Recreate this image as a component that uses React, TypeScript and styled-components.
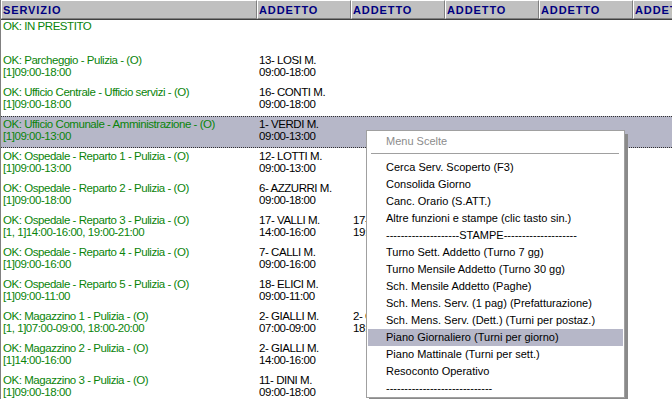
import React from "react";
import styled, { createGlobalStyle } from "styled-components";

const GlobalStyle = createGlobalStyle`
  html, body {
    margin: 0;
    padding: 0;
    background: #ffffff;
    overflow: hidden;
  }
`;

const COLS = "256px 94px 94px 94px 94px 94px";

const Screen = styled.div`
  width: 672px;
  height: 399px;
  overflow: hidden;
  position: relative;
  background: #ffffff;
  border-left: 1px solid #808080;
  box-sizing: border-box;
`;

const HeaderRow = styled.div`
  display: grid;
  grid-template-columns: ${COLS};
  height: 20px;
  background: #c0c0c0;
  border-bottom: 1px solid #404040;
  box-sizing: border-box;
`;

const HeaderCell = styled.div`
  display: flex;
  align-items: center;
  padding-left: 1px;
  border-top: 1px solid #ffffff;
  border-left: 1px solid #ffffff;
  border-right: 1px solid #808080;
  border-bottom: 1px solid #808080;
  font-family: "Liberation Sans", Arial, sans-serif;
  font-weight: bold;
  font-size: 11px;
  letter-spacing: 0.9px;
  color: #000080;
  white-space: nowrap;
  overflow: hidden;
`;

const Row = styled.div<{ $selected?: boolean; $first?: boolean }>`
  display: grid;
  grid-template-columns: ${COLS};
  height: 32px;
  box-sizing: border-box;
  padding-top: ${(p) => (p.$first ? "0px" : p.$selected ? "1px" : "2px")};
  background: ${(p) => (p.$selected ? "#b6b7c8" : "transparent")};
  border-top: ${(p) => (p.$selected ? "1px dotted #303030" : "none")};
  border-bottom: ${(p) => (p.$selected ? "1px dotted #303030" : "none")};
`;

const Cell = styled.div<{ $green?: boolean }>`
  display: flex;
  flex-direction: column;
  padding-left: 2px;
  font-family: "Liberation Sans", Arial, sans-serif;
  font-size: 11.5px;
  letter-spacing: -0.45px;
  line-height: 12px;
  color: ${(p) => (p.$green ? "#0a840a" : "#000000")};
  white-space: nowrap;
  overflow: hidden;
`;

const Menu = styled.div`
  position: absolute;
  left: 365px;
  top: 130px;
  width: 255px;
  padding: 2px 1px 0;
  background: #ffffff;
  border: 1px solid #a0a0a0;
  box-shadow: 3px 4px 0 #8a8a8a;
  font-family: "Liberation Sans", Arial, sans-serif;
  font-size: 11px;
`;

const MenuTitle = styled.div`
  height: 17px;
  line-height: 17px;
  padding-left: 18px;
  color: #8c8c8c;
`;

const MenuSeparator = styled.div`
  height: 1px;
  margin: 3px 4px 5px 3px;
  background: #a0a0a0;
`;

const MenuItem = styled.div<{ $active?: boolean }>`
  height: 17px;
  line-height: 17px;
  padding-left: 18px;
  color: #000000;
  white-space: nowrap;
  background: ${(p) => (p.$active ? "#b6b7c8" : "transparent")};
`;

type Turno = [string, string];

interface Servizio {
  nome: string;
  orario: string;
  addetti: Turno[];
  selected?: boolean;
}

const servizi: Servizio[] = [
  { nome: "OK: Parcheggio - Pulizia - (O)", orario: "[1]09:00-18:00", addetti: [["13- LOSI M.", "09:00-18:00"]] },
  { nome: "OK: Ufficio Centrale - Ufficio servizi - (O)", orario: "[1]09:00-18:00", addetti: [["16- CONTI M.", "09:00-18:00"]] },
  { nome: "OK: Ufficio Comunale - Amministrazione - (O)", orario: "[1]09:00-13:00", addetti: [["1- VERDI M.", "09:00-13:00"]], selected: true },
  { nome: "OK: Ospedale - Reparto 1 - Pulizia - (O)", orario: "[1]09:00-13:00", addetti: [["12- LOTTI M.", "09:00-13:00"]] },
  { nome: "OK: Ospedale - Reparto 2 - Pulizia - (O)", orario: "[1]09:00-18:00", addetti: [["6- AZZURRI M.", "09:00-18:00"]] },
  {
    nome: "OK: Ospedale - Reparto 3 - Pulizia - (O)",
    orario: "[1, 1]14:00-16:00, 19:00-21:00",
    addetti: [["17- VALLI M.", "14:00-16:00"], ["17- VALLI M.", "19:00-21:00"]],
  },
  { nome: "OK: Ospedale - Reparto 4 - Pulizia - (O)", orario: "[1]09:00-16:00", addetti: [["7- CALLI M.", "09:00-16:00"]] },
  { nome: "OK: Ospedale - Reparto 5 - Pulizia - (O)", orario: "[1]09:00-11:00", addetti: [["18- ELICI M.", "09:00-11:00"]] },
  {
    nome: "OK: Magazzino 1 - Pulizia - (O)",
    orario: "[1, 1]07:00-09:00, 18:00-20:00",
    addetti: [["2- GIALLI M.", "07:00-09:00"], ["2- GIALLI M.", "18:00-20:00"]],
  },
  { nome: "OK: Magazzino 2 - Pulizia - (O)", orario: "[1]14:00-16:00", addetti: [["2- GIALLI M.", "14:00-16:00"]] },
  { nome: "OK: Magazzino 3 - Pulizia - (O)", orario: "[1]09:00-18:00", addetti: [["11- DINI M.", "09:00-18:00"]] },
];

const voci = [
  "Cerca Serv. Scoperto (F3)",
  "Consolida Giorno",
  "Canc. Orario (S.ATT.)",
  "Altre funzioni e stampe (clic tasto sin.)",
  "--------------------STAMPE--------------------",
  "Turno Sett. Addetto (Turno 7 gg)",
  "Turno Mensile Addetto (Turno 30 gg)",
  "Sch. Mensile Addetto (Paghe)",
  "Sch. Mens. Serv. (1 pag) (Prefatturazione)",
  "Sch. Mens. Serv. (Dett.) (Turni per postaz.)",
  "Piano Giornaliero (Turni per giorno)",
  "Piano Mattinale (Turni per sett.)",
  "Resoconto Operativo",
  "-----------------------------",
];

export default function App() {
  return (
    <>
      <GlobalStyle />
      <Screen>
        <HeaderRow>
          <HeaderCell>SERVIZIO</HeaderCell>
          {[0, 1, 2, 3, 4].map((i) => (
            <HeaderCell key={i}>ADDETTO</HeaderCell>
          ))}
        </HeaderRow>

        <Row $first>
          <Cell $green>OK: IN PRESTITO</Cell>
        </Row>

        {servizi.map((s, i) => (
          <Row key={i} $selected={s.selected}>
            <Cell $green>
              <span>{s.nome}</span>
              <span>{s.orario}</span>
            </Cell>
            {s.addetti.map((a, j) => (
              <Cell key={j}>
                <span>{a[0]}</span>
                <span>{a[1]}</span>
              </Cell>
            ))}
          </Row>
        ))}

        <Menu>
          <MenuTitle>Menu Scelte</MenuTitle>
          <MenuSeparator />
          {voci.map((v, i) => (
            <MenuItem key={i} $active={v.startsWith("Piano Giornaliero")}>
              {v}
            </MenuItem>
          ))}
        </Menu>
      </Screen>
    </>
  );
}
